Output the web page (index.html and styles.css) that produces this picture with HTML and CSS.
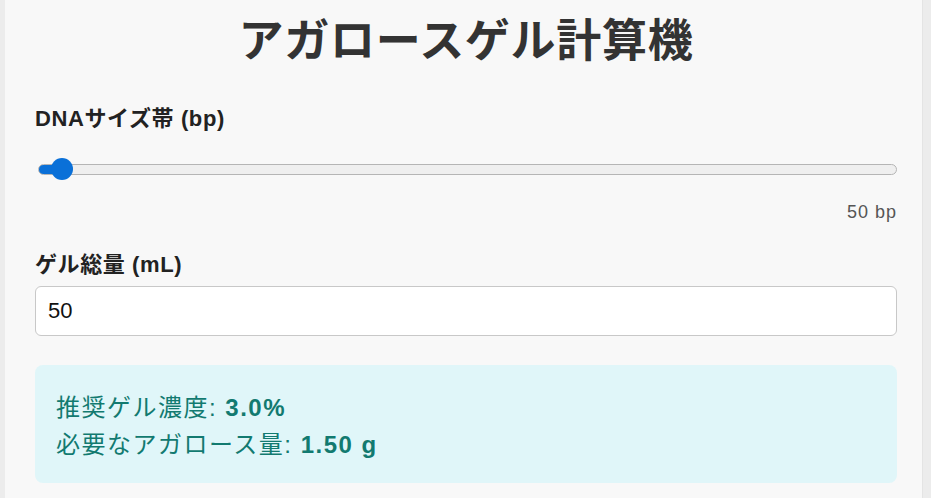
FILE: index.html
```html
<!DOCTYPE html>
<html lang="ja">
<head>
<meta charset="utf-8">
<title>アガロースゲル計算機</title>
<link rel="stylesheet" href="styles.css">
</head>
<body>
<div class="page">
  <main class="card">
    <h1 class="title">アガロースゲル計算機</h1>
    <label class="label label-size">DNAサイズ帯 (bp)</label>
    <div class="slider">
      <div class="track" style="--fill: 27px"></div>
      <div class="thumb" style="left: 16px"></div>
    </div>
    <div class="slider-value">50 bp</div>
    <label class="label label-volume">ゲル総量 (mL)</label>
    <div class="input">50</div>
    <section class="result">
      <p class="line">推奨ゲル濃度: <strong>3.0%</strong></p>
      <p class="line">必要なアガロース量: <strong>1.50 g</strong></p>
    </section>
  </main>
</div>
</body>
</html>
```

FILE: styles.css
```css
html, body {
  margin: 0;
  padding: 0;
}

body {
  background: #ececec;
  font-family: "Liberation Sans", Arial, "Noto Sans CJK JP", sans-serif;
  color: #333;
  height: 498px;
  overflow: hidden;
}

.page {
  padding-left: 5px;
}

.card {
  width: 918px;
  height: 498px;
  box-sizing: border-box;
  background: #f8f8f8;
  border-right: 1px solid #e4e4e4;
  padding: 11px 25px 0 30px;
  display: flex;
  flex-direction: column;
}

.title {
  margin: 0;
  height: 54px;
  line-height: 54px;
  font-size: 45px;
  letter-spacing: 0.7px;
  font-weight: 700;
  text-align: center;
  color: #333;
  font-family: "Noto Sans CJK JP", sans-serif;
}

.label {
  display: block;
  font-size: 22px;
  letter-spacing: 0.6px;
  line-height: 31px;
  font-weight: 700;
  color: #222;
}

.label-size {
  margin-top: 38px;
}

.label-volume {
  margin-top: 25px;
}

.slider {
  position: relative;
  height: 22px;
  margin-top: 24px;
  display: flex;
  align-items: center;
  padding: 0 0 0 3px;
}

.track {
  flex: 1;
  height: 9px;
  border: 1px solid #b5b5b5;
  border-radius: 6px;
  background: linear-gradient(to right, #0a70d8 0, #0a70d8 var(--fill), #efefef var(--fill));
}

.thumb {
  position: absolute;
  top: 0;
  width: 22px;
  height: 22px;
  border-radius: 50%;
  background: #0a70d8;
}

.slider-value {
  margin-top: 20px;
  text-align: right;
  font-size: 18px;
  letter-spacing: 1px;
  line-height: 24px;
  color: #555;
}

.input {
  margin-top: 6px;
  height: 50px;
  box-sizing: border-box;
  border: 1px solid #c8c8c8;
  border-radius: 6px;
  background: #fff;
  padding: 0 12px;
  display: flex;
  align-items: center;
  font-size: 22px;
  color: #111;
}

.result {
  margin-top: 29px;
  height: 118px;
  box-sizing: border-box;
  background: #e0f6f9;
  border-radius: 8px;
  padding: 24px 21px 0;
  color: #127a70;
}

.line {
  margin: 0;
  font-size: 24px;
  letter-spacing: 1.5px;
  line-height: 37px;
}

.line strong {
  font-weight: 700;
}
```
